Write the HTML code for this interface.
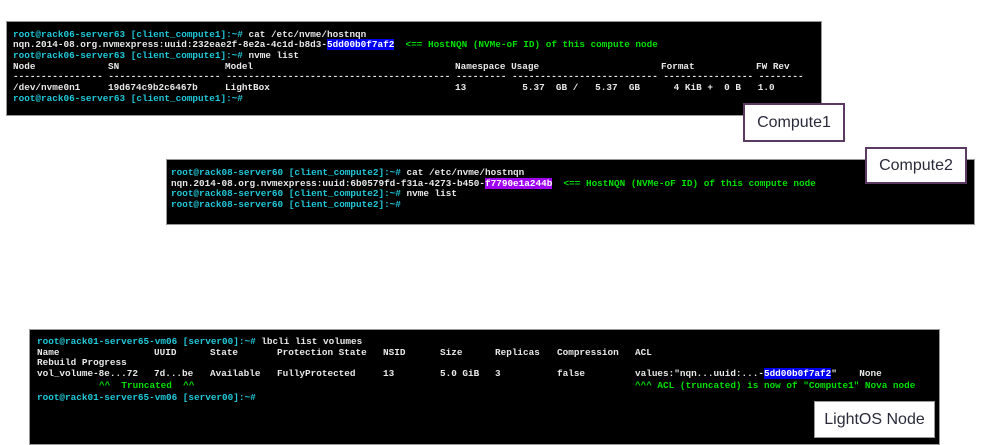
<!DOCTYPE html>
<html><head><meta charset="utf-8"><style>
body{margin:0;width:982px;height:445px;background:#fff;position:relative;overflow:hidden;font-family:"Liberation Mono",monospace;}
.t{position:absolute;background:#000;border:1px solid #999;box-sizing:border-box;}
.l{position:absolute;white-space:pre;font-size:9.35px;font-weight:bold;color:#e8e8e8;line-height:10px;}
.c{color:#1fc8d8}.g{color:#00e000}
.hb{background:#0000f0;color:#fff}.hp{background:#a000f0;color:#fff}
.lab{position:absolute;background:#fff;border:2px solid #5a3a60;box-sizing:border-box;font-family:"Liberation Sans",sans-serif;font-size:16px;color:#2a2a3a;display:flex;align-items:center;justify-content:center;}
</style></head><body>
<div class="t" style="left:6px;top:21px;width:816px;height:95px"></div>
<div class="l c" style="left:13px;top:30px">root@rack06-server63 [client_compute1]:~# <span style="color:#e8e8e8">cat /etc/nvme/hostnqn</span></div>
<div class="l" style="left:13px;top:40px">nqn.2014-08.org.nvmexpress:uuid:232eae2f-8e2a-4c1d-b8d3-<span class="hb">5dd00b0f7af2</span>  <span class="g">&lt;== HostNQN (NVMe-oF ID) of this compute node</span></div>
<div class="l c" style="left:13px;top:51px">root@rack06-server63 [client_compute1]:~# <span style="color:#e8e8e8">nvme list</span></div>
<div class="l" style="left:13px;top:62px">Node</div><div class="l" style="left:108px;top:62px">SN</div><div class="l" style="left:225px;top:62px">Model</div><div class="l" style="left:455px;top:62px">Namespace Usage</div><div class="l" style="left:661px;top:62px">Format</div><div class="l" style="left:756px;top:62px">FW Rev</div>
<div class="l" style="left:13px;top:72px">---------------- -------------------- ---------------------------------------- --------- -------------------------- ---------------- --------</div>
<div class="l" style="left:13px;top:83px">/dev/nvme0n1</div><div class="l" style="left:108px;top:83px">19d674c9b2c6467b</div><div class="l" style="left:225px;top:83px">LightBox</div><div class="l" style="left:455px;top:83px">13          5.37  GB /   5.37  GB      4 KiB +  0 B   1.0</div>
<div class="l c" style="left:13px;top:94px">root@rack06-server63 [client_compute1]:~#</div>
<div class="lab" style="left:743px;top:103px;width:102px;height:39px">Compute1</div>

<div class="t" style="left:166px;top:159px;width:809px;height:66px"></div>
<div class="l c" style="left:171px;top:168px">root@rack08-server60 [client_compute2]:~# <span style="color:#e8e8e8">cat /etc/nvme/hostnqn</span></div>
<div class="l" style="left:171px;top:179px">nqn.2014-08.org.nvmexpress:uuid:6b0579fd-f31a-4273-b450-<span class="hp">f7790e1a244b</span>  <span class="g">&lt;== HostNQN (NVMe-oF ID) of this compute node</span></div>
<div class="l c" style="left:171px;top:189px">root@rack08-server60 [client_compute2]:~# <span style="color:#e8e8e8">nvme list</span></div>
<div class="l c" style="left:171px;top:200px">root@rack08-server60 [client_compute2]:~#</div>
<div class="lab" style="left:865px;top:147px;width:102px;height:37px">Compute2</div>

<div class="t" style="left:29px;top:329px;width:911px;height:116px"></div>
<div class="l c" style="left:37px;top:337px">root@rack01-server65-vm06 [server00]:~# <span style="color:#e8e8e8">lbcli list volumes</span></div>
<div class="l" style="left:37px;top:348px">Name</div><div class="l" style="left:154px;top:348px">UUID</div><div class="l" style="left:210px;top:348px">State</div><div class="l" style="left:277px;top:348px">Protection State</div><div class="l" style="left:383px;top:348px">NSID</div><div class="l" style="left:440px;top:348px">Size</div><div class="l" style="left:495px;top:348px">Replicas</div><div class="l" style="left:557px;top:348px">Compression</div><div class="l" style="left:635px;top:348px">ACL</div>
<div class="l" style="left:37px;top:358px">Rebuild Progress</div>
<div class="l" style="left:37px;top:369px">vol_volume-8e...72</div><div class="l" style="left:154px;top:369px">7d...be</div><div class="l" style="left:210px;top:369px">Available</div><div class="l" style="left:277px;top:369px">FullyProtected</div><div class="l" style="left:383px;top:369px">13</div><div class="l" style="left:440px;top:369px">5.0 GiB</div><div class="l" style="left:495px;top:369px">3</div><div class="l" style="left:557px;top:369px">false</div><div class="l" style="left:635px;top:369px">values:"nqn...uuid:...-<span class="hb">5dd00b0f7af2</span>"    None</div>
<div class="l g" style="left:99px;top:381px">^^  Truncated  ^^</div><div class="l g" style="left:635px;top:381px">^^^ ACL (truncated) is now of "Compute1" Nova node</div>
<div class="l c" style="left:37px;top:393px">root@rack01-server65-vm06 [server00]:~#</div>
<div class="lab" style="left:814px;top:401px;width:121px;height:37px;border:1px solid #999">LightOS Node</div>
</body></html>
